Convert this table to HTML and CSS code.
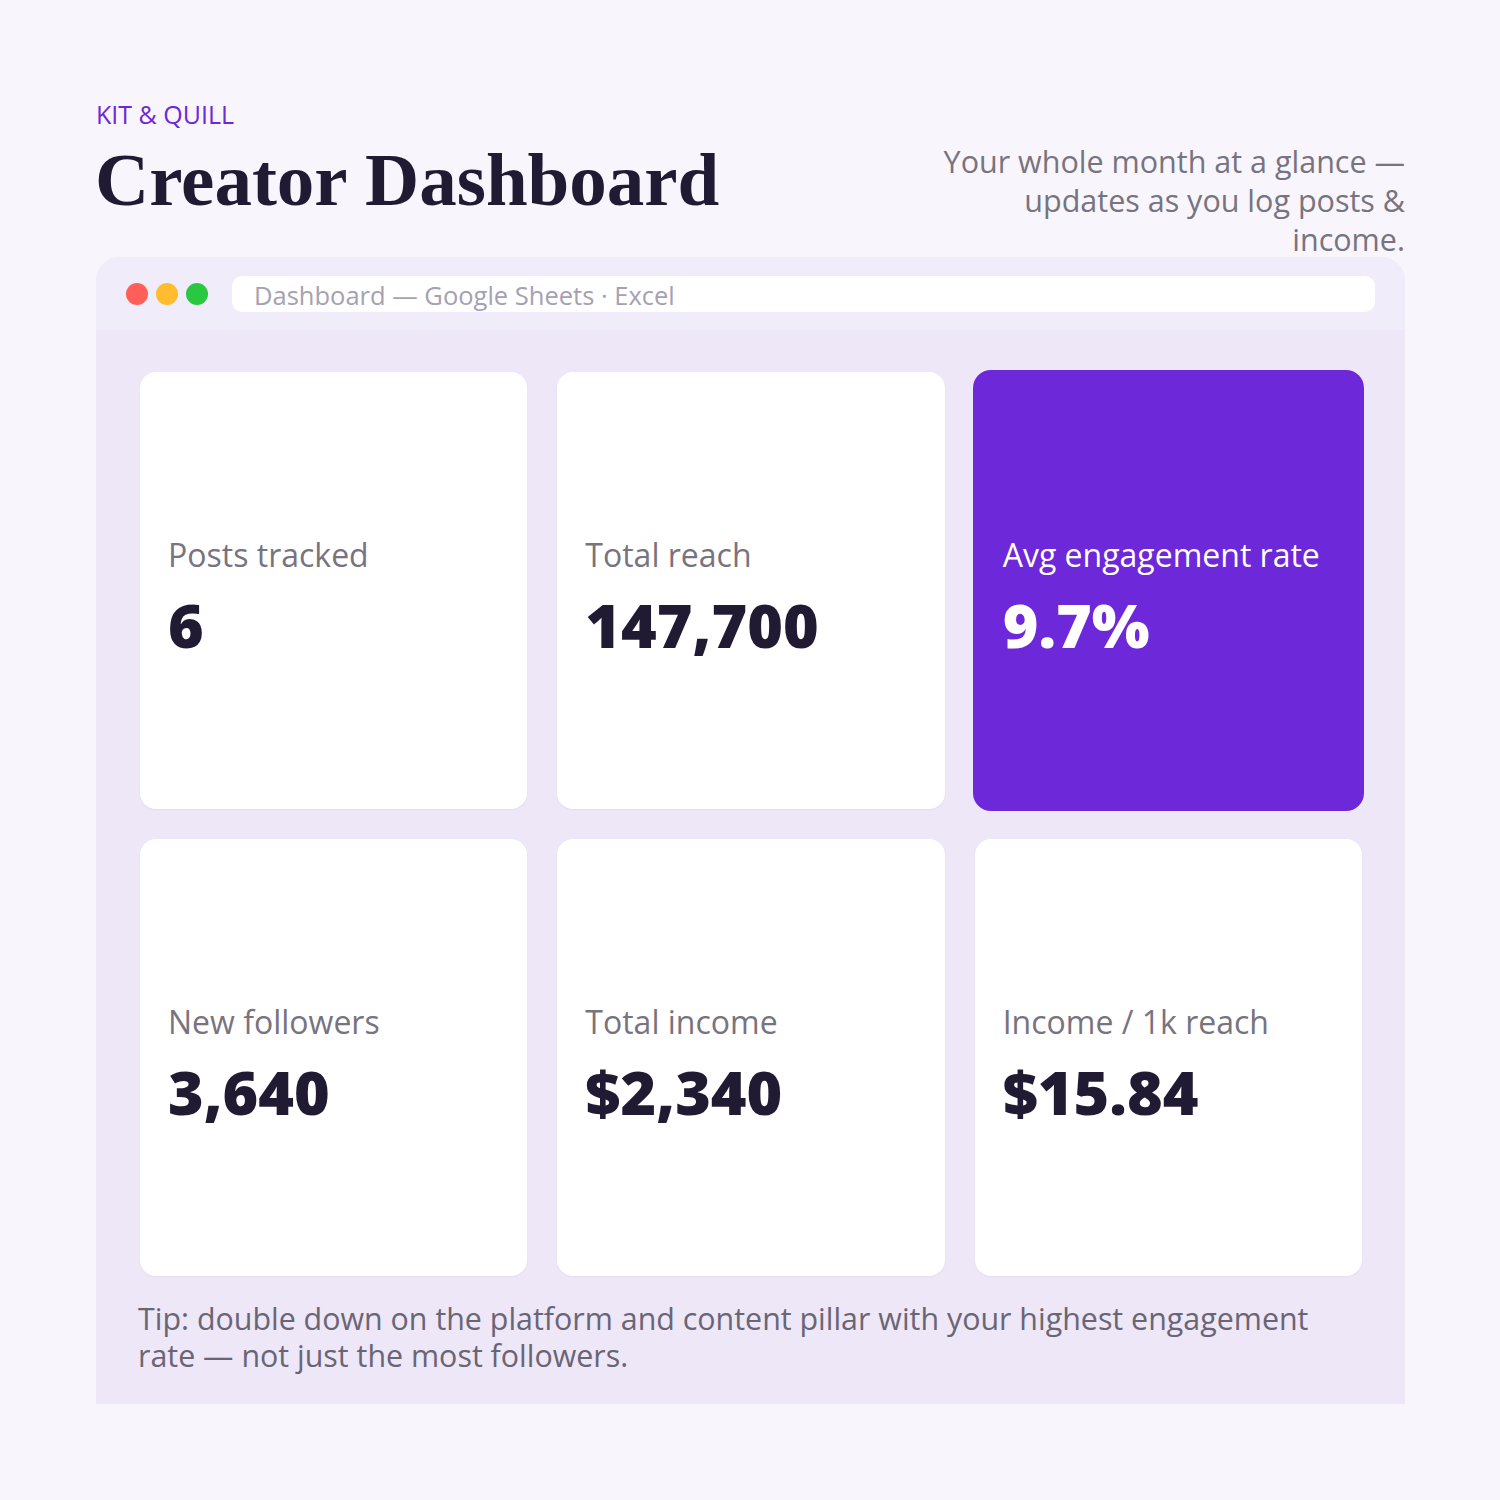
FILE: index.html
```html
<!DOCTYPE html>
<html lang="en">
<head>
<meta charset="utf-8">
<title>Creator Dashboard</title>
<link rel="stylesheet" href="styles.css">
</head>
<body>
<div class="page">
  <header class="header">
    <div class="heading">
      <div class="brand">KIT &amp; QUILL</div>
      <h1 class="title">Creator Dashboard</h1>
    </div>
    <p class="subtitle">Your whole month at a glance — updates as you log posts &amp; income.</p>
  </header>

  <section class="window">
    <div class="titlebar">
      <div class="dots">
        <span class="dot dot-red"></span>
        <span class="dot dot-yellow"></span>
        <span class="dot dot-green"></span>
      </div>
      <div class="address">Dashboard — Google Sheets · Excel</div>
    </div>
    <div class="window-body">
      <div class="grid">
        <div class="card">
          <div class="label">Posts tracked</div>
          <div class="value">6</div>
        </div>
        <div class="card">
          <div class="label">Total reach</div>
          <div class="value">147,700</div>
        </div>
        <div class="card card-accent">
          <div class="label">Avg engagement rate</div>
          <div class="value">9.7%</div>
        </div>
        <div class="card">
          <div class="label">New followers</div>
          <div class="value">3,640</div>
        </div>
        <div class="card">
          <div class="label">Total income</div>
          <div class="value">$2,340</div>
        </div>
        <div class="card">
          <div class="label">Income / 1k reach</div>
          <div class="value">$15.84</div>
        </div>
      </div>
      <p class="tip">Tip: double down on the platform and content pillar with your highest engagement rate — not just the most followers.</p>
    </div>
  </section>
</div>
</body>
</html>
```

FILE: styles.css
```css
* { box-sizing: border-box; }

html, body {
  margin: 0;
  padding: 0;
  background: #f8f6fc;
}

body {
  font-family: "Open Sans", "Noto Sans", sans-serif;
  color: #211a33;
}

.page {
  width: 1309px;
  margin-left: 96px;
  padding-top: 99px;
}

.header {
  display: flex;
  justify-content: space-between;
  align-items: flex-start;
  height: 158px;
}

.brand {
  font-size: 25px;
  line-height: 30px;
  font-weight: 500;
  color: #6d28d9;
}

.title {
  margin: 8px 0 0 -1px;
  font-family: "Liberation Serif", "DejaVu Serif", serif;
  font-size: 75px;
  line-height: 86px;
  font-weight: 700;
  color: #211a33;
}

.subtitle {
  margin: 43px 0 0 0;
  width: 470px;
  text-align: right;
  font-size: 30.5px;
  line-height: 39px;
  color: #77737f;
}

.window {
  background: #ede7f8;
  border-radius: 24px 24px 0 0;
  overflow: hidden;
}

.titlebar {
  height: 73px;
  display: flex;
  align-items: center;
  padding: 0 30px;
  background: #f0ecf9;
}

.dots {
  display: flex;
  gap: 8px;
}

.dot {
  width: 22px;
  height: 22px;
  border-radius: 50%;
  display: block;
}

.dot-red { background: #ff5f57; }
.dot-yellow { background: #febc2e; }
.dot-green { background: #28c840; }

.address {
  flex: 1;
  margin-left: 24px;
  height: 36px;
  background: #ffffff;
  border-radius: 10px;
  padding: 2px 0 0 22px;
  font-size: 25.5px;
  line-height: 34px;
  color: #a5a1b1;
  white-space: nowrap;
}

.window-body {
  padding: 42px 43px 30px 44px;
}

.grid {
  display: grid;
  grid-template-columns: repeat(3, 1fr);
  grid-auto-rows: 437px;
  gap: 30px;
}

.card {
  background: #ffffff;
  border-radius: 16px;
  padding: 14px 28px 0;
  display: flex;
  flex-direction: column;
  justify-content: center;
  box-shadow: 0 1px 2px rgba(60, 40, 100, 0.05);
}

.card-accent {
  background: #6d28d9;
  box-shadow: 0 0 0 2px #6d28d9;
}

.label {
  font-size: 32px;
  line-height: 42px;
  color: #78737f;
}

.value {
  margin-top: 12px;
  font-size: 61px;
  line-height: 74px;
  font-weight: 800;
  color: #211a33;
}

.card-accent .label,
.card-accent .value {
  color: #ffffff;
}

.tip {
  margin: 24px 0 0 -2px;
  font-size: 30.4px;
  line-height: 37px;
  color: #6a6575;
}
```
